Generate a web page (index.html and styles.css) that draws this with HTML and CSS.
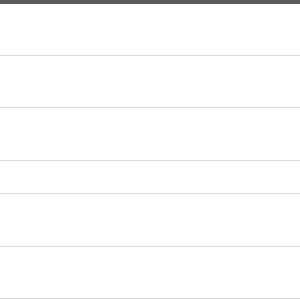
FILE: index.html
```html
<!DOCTYPE html>
<html lang="en">
<head>
    <meta charset="UTF-8">
    <title>List</title>
    <link rel="stylesheet" href="styles.css">
</head>
<body>
    <div class="topbar"></div>
    <ul class="list">
        <li class="row"></li>
        <li class="row"></li>
        <li class="row tall"></li>
        <li class="row short"></li>
        <li class="row tall"></li>
        <li class="row"></li>
    </ul>
</body>
</html>
```
FILE: styles.css
```css
body {
    margin: 0;
    font-family: "Liberation Sans", Arial, sans-serif;
    background: #fff;
}
.topbar {
    height: 4px;
    background-color: #5b5b5b;
}
.list {
    list-style: none;
    margin: 0;
    padding: 0;
}
.row {
    height: 51px;
    border-bottom: 1px solid #dcdcdc;
}
.row.tall {
    height: 52px;
}
.row.short {
    height: 32px;
}
```
